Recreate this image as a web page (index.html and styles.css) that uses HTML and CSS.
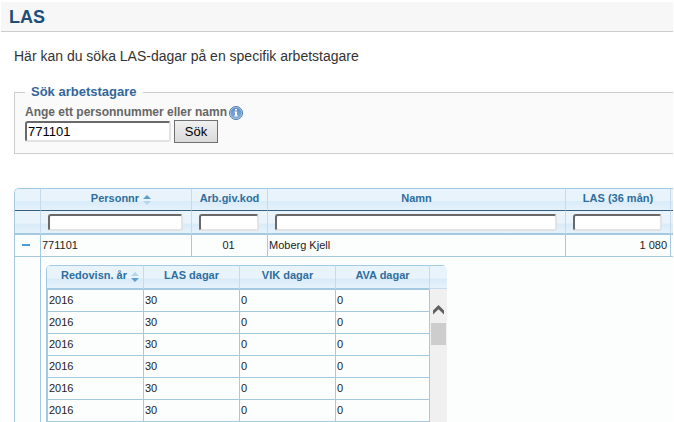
FILE: index.html
```
<!DOCTYPE html>
<html lang="sv">
<head>
  <meta charset="UTF-8" />
  <meta name="viewport" content="width=device-width, initial-scale=1" />
  <title>LAS</title>
  <link rel="stylesheet" href="styles.css">
</head>
<body>
<header class="page-header">
  <h1>LAS</h1>
</header>

<main>
  <p class="intro">Här kan du söka LAS-dagar på en specifik arbetstagare</p>

  <form class="search-form">
    <fieldset>
      <legend>Sök arbetstagare</legend>
      <div class="label-row">
        <label for="search">Ange ett personnummer eller namn</label>
        <svg class="info-icon" viewBox="0 0 14 14" aria-hidden="true">
          <defs>
            <linearGradient id="info-fill" x1="0" y1="0" x2="0" y2="1">
              <stop offset="0" stop-color="#5f8fc6" />
              <stop offset="1" stop-color="#7fabdd" />
            </linearGradient>
          </defs>
          <circle cx="7" cy="7" r="6.5" fill="#c3d7ec" stroke="#4a76ab" />
          <circle cx="7" cy="7" r="5.5" fill="url(#info-fill)" />
          <path d="M6 3h2v1.600H6zM5.400 5.600H8v4h.8v1H5.300v-1H6v-3h-.6z" fill="#fff" />
        </svg>
      </div>
      <div class="search-row">
        <input type="text" id="search" class="search-input" value="771101">
        <button type="button" class="search-btn">Sök</button>
      </div>
    </fieldset>
  </form>

  <table class="grid">
    <colgroup>
      <col class="col-toggle"><col class="col-pnr"><col class="col-kod"><col class="col-namn"><col class="col-las"><col class="col-end">
    </colgroup>
    <thead>
      <tr class="grid-head">
        <th></th>
        <th class="sorted">Personnr <svg class="sort" viewBox="0 0 8 10" aria-hidden="true"><path d="M4 0l4 4H0z" fill="#5b9fd0" /><path d="M0 6h8l-4 4z" fill="#b5d6ec" /></svg></th>
        <th>Arb.giv.kod</th>
        <th>Namn</th>
        <th>LAS (36 mån)</th>
        <th></th>
      </tr>
      <tr class="grid-filter">
        <td></td>
        <td><input type="text" aria-label="Personnr"></td>
        <td><input type="text" aria-label="Arb.giv.kod"></td>
        <td><input type="text" aria-label="Namn"></td>
        <td><input type="text" aria-label="LAS (36 mån)"></td>
        <td></td>
      </tr>
    </thead>
    <tbody>
      <tr class="grid-row">
        <td><button type="button" class="toggle" aria-label="Dölj"></button></td>
        <td>771101</td>
        <td class="center">01</td>
        <td>Moberg Kjell</td>
        <td class="right">1 080</td>
        <td></td>
      </tr>
      <tr class="grid-detail">
        <td></td>
        <td colspan="5">
          <div class="subgrid">
            <table>
              <thead>
                <tr>
                  <th class="sorted">Redovisn. år <svg class="sort" viewBox="0 0 8 10" aria-hidden="true"><path d="M4 0l4 4H0z" fill="#b5d6ec" /><path d="M0 6h8l-4 4z" fill="#5b9fd0" /></svg></th>
                  <th>LAS dagar</th>
                  <th>VIK dagar</th>
                  <th>AVA dagar</th>
                </tr>
              </thead>
              <tbody>
                <tr><td>2016</td><td>30</td><td>0</td><td>0</td></tr>
                <tr><td>2016</td><td>30</td><td>0</td><td>0</td></tr>
                <tr><td>2016</td><td>30</td><td>0</td><td>0</td></tr>
                <tr><td>2016</td><td>30</td><td>0</td><td>0</td></tr>
                <tr><td>2016</td><td>30</td><td>0</td><td>0</td></tr>
                <tr><td>2016</td><td>30</td><td>0</td><td>0</td></tr>
              </tbody>
            </table>
            <div class="subgrid-side">
              <div class="side-head"></div>
              <div class="scrollbar">
                <svg viewBox="0 0 11 10" aria-hidden="true"><path d="M0 9.500V5.500L5.500 0 11 5.500v4L5.500 4.200z" fill="#606060" /></svg>
                <div class="thumb"></div>
              </div>
            </div>
          </div>
        </td>
      </tr>
    </tbody>
  </table>
</main>
</body>
</html>
```

FILE: styles.css
```
* { margin: 0; padding: 0; box-sizing: border-box; }
body { background: #fff; color: #222; font-family: "Liberation Sans", Arial, sans-serif; font-size: 11px; height: 100vh; padding: 2px 1px 0; overflow: hidden; }

.page-header { background: #f7f7f7; border-bottom: 1px solid #ccc; padding: 2px 8px 0; }
.page-header h1 { color: #1f4e79; font-size: 18px; line-height: 27px; }

main { padding-left: 13px; }
.intro { color: #333; font-size: 14px; line-height: 18px; padding-top: 15px; }

/* search box */
.search-form { margin-top: 19px; }
fieldset { background: #fafafa; border: 1px solid #ccc; border-right: none; padding: 5px 10px 10px; min-width: 0; }
legend { color: #33669a; font-size: 13px; font-weight: bold; line-height: 16px; padding: 0 6px; }
.label-row { display: flex; align-items: center; gap: 2px; height: 15px; }
.label-row label { color: #666; font-size: 12px; font-weight: bold; line-height: 15px; }
.info-icon { width: 14px; height: 14px; }
.search-row { display: flex; align-items: center; gap: 3px; }
input { background: #fff; border: 2px solid; border-color: #696969 #e3e3e3 #e3e3e3 #696969; border-radius: 3px; font-family: inherit; }
.search-input { width: 146px; height: 21px; padding: 0 1px; color: #000; font-size: 13px; }
.search-btn { width: 44px; height: 23px; background: linear-gradient(#f0f0f0, #dadada); border: 1px solid #707070; color: #000; font-family: inherit; font-size: 13px; }

/* result grid */
table { border-collapse: separate; border-spacing: 0; table-layout: fixed; }
th { color: #2e6e9e; font-weight: bold; }
th.sorted { padding-left: 10px; }
.sort { width: 8px; height: 10px; margin-left: 1px; vertical-align: -3px; }
.grid { width: 100%; margin-top: 34px; border: 1px solid #a6c9e2; border-width: 1px 0 0 1px; border-top-left-radius: 5px; }
.col-toggle { width: 26px; }
.col-pnr { width: 151px; }
.col-kod { width: 76px; }
.col-las { width: 105px; }
.col-end { width: 2px; }
.grid-head th, .grid-filter td, .subgrid th, .side-head { background: linear-gradient(#e8f3fc 0, #e8f3fc 55%, #d9ebf9 60%, #e6f2fb 100%); }
.grid-head th { height: 22px; padding-bottom: 3px; line-height: 16px; border-right: 1px solid #c5dbec; border-bottom: 1px solid #35607f; }
.grid-head th:first-child { border-top-left-radius: 4px; }
.grid-filter td { height: 24px; padding: 3px 8px 2px 7px; vertical-align: top; border-right: 1px solid #c5dbec; border-bottom: 2px solid #a6c9e2; }
.grid-filter td:last-child { padding: 0; }
.grid-filter input { display: block; width: 100%; height: 17px; font-size: 11px; }
.grid-row td { height: 22px; padding: 0 3px 2px 1px; background: #fcfdfd; border-right: 1px solid #a6c9e2; border-bottom: 1px solid #a6c9e2; }
.grid-row td.center { text-align: center; }
.grid-row td.right { text-align: right; }
.grid-head th:last-child, .grid-filter td:last-child, .grid-row td:last-child { border-right: none; padding: 0; }
.toggle { display: flex; align-items: center; justify-content: center; width: 20px; height: 18px; background: none; border: none; }
.toggle::before { content: ""; width: 8px; height: 2px; background: #469bdd; }

/* expanded row */
.grid-detail > td { padding: 8px 0 0 5px; background: #fcfdfd; vertical-align: top; }
.grid-detail > td:first-child { padding: 0; border-right: 1px solid #a6c9e2; }
.subgrid { display: flex; width: 401px; border-left: 1px solid #a6c9e2; border-radius: 5px 5px 0 0; overflow: hidden; }
.subgrid table { width: 383px; }
.subgrid th { height: 25px; padding-bottom: 5px; line-height: 16px; border: 1px solid #c5dbec; border-width: 1px 1px 2px 0; border-top-color: #a6c9e2; border-bottom-color: #a6c9e2; }
.subgrid th:nth-child(-n+3) { width: 96px; }
.subgrid th:first-child { width: 97px; }
.subgrid td { height: 22px; padding: 0 3px 2px 1px; border-right: 1px solid #a6c9e2; border-bottom: 1px solid #a6c9e2; }
.subgrid td:first-child { border-left: 1px solid #a6c9e2; }
.subgrid-side { flex: 1; display: flex; flex-direction: column; }
.side-head { height: 24px; border-top: 1px solid #a6c9e2; border-bottom: 1px solid #c5dbec; }
.scrollbar { flex: 1; padding: 16px 1px 0; background: #f0f0f0; }
.scrollbar svg { display: block; width: 11px; height: 10px; margin: 0 auto 8px; }
.thumb { height: 22px; background: #cdcdcd; }
```
